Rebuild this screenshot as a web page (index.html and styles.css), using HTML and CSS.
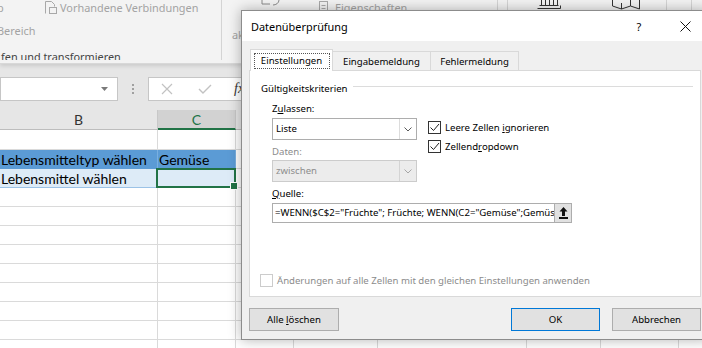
FILE: index.html
```html
<!DOCTYPE html>
<html lang="de">
<head>
    <meta charset="UTF-8">
    <meta name="viewport" content="width=device-width, initial-scale=1.0">
    <title>Datenüberprüfung</title>
    <link rel="stylesheet" href="styles.css">
</head>
<body>
    <div class="excel">
        <div class="ribbon">
            <div class="rgroup group-get">
                <div class="rrow">
                    <span class="rcut">b</span>
                    <svg class="ricon" width="13" height="14" viewBox="0 0 13 14"><path d="M1.5 13.5V1.5h6l3 3v2" fill="none" stroke="#a8a8a8"/><rect x="5.5" y="7.5" width="7" height="6" fill="none" stroke="#a8a8a8"/></svg>
                    <span>Vorhandene Verbindungen</span>
                </div>
                <div class="rrow second"><span class="rshift">Bereich</span></div>
                <div class="rlabel">fen und transformieren</div>
            </div>
            <div class="rgroup group-query">
                <div class="rbig">
                    <svg width="28" height="6" viewBox="0 0 28 6"><path d="M1 0v4h8M18 0c0 3-3 5-6 5" fill="none" stroke="#8a8a8a"/></svg>
                    <span class="rbig-label">Alle</span>
                    <span class="rbig-label">aktualisieren</span>
                </div>
                <div class="rsmall">
                    <svg width="11" height="13" viewBox="0 0 11 13"><rect x="1.5" y="0.5" width="8" height="12" fill="none" stroke="#a8a8a8"/><path d="M3.5 4.5h4M3.5 7.5h4" stroke="#a8a8a8"/></svg>
                    <span>Eigenschaften</span>
                </div>
            </div>
            <div class="rgroup group-narrow"></div>
            <div class="rgroup group-types">
                <svg width="26" height="9" viewBox="0 0 26 9"><path d="M5.5 0v5M9.5 0v5M13.5 0v5M17.5 0v5M21.5 0v5M3.5 5.5h19M1.5 8.5h23v-3" fill="none" stroke="#333"/></svg>
                <svg width="28" height="10" viewBox="0 0 28 10"><path d="M0.5 0v6l9 3 9-3 9 3V0M9.5 9V3M18.5 6V0" fill="none" stroke="#333"/></svg>
            </div>
            <div class="rgroup group-more">
                <svg width="7" height="4" viewBox="0 0 7 4"><path d="M0.5 0.5l3 3 3-3" fill="none" stroke="#9a9a9a"/></svg>
            </div>
        </div>

        <div class="formula-bar">
            <div class="name-box">
                <svg width="7" height="4" viewBox="0 0 7 4"><path d="M0 0h7L3.5 4z" fill="#7a7a7a"/></svg>
            </div>
            <div class="fb-dots"><i></i><i></i><i></i></div>
            <div class="fb-input">
                <svg class="fb-cancel" width="12" height="12" viewBox="0 0 12 12"><path d="M1 1l10 10M11 1L1 11" stroke="#c2c2c2" stroke-width="1.2"/></svg>
                <svg class="fb-ok" width="14" height="10" viewBox="0 0 14 10"><path d="M1 5l4 4 8-8" fill="none" stroke="#c2c2c2" stroke-width="1.4"/></svg>
                <span class="fx">fx</span>
            </div>
        </div>

        <div class="sheet">
            <div class="cell hd">B</div><div class="cell hd sel-col">C</div><div class="cell hd">D</div><div class="cell hd">E</div><div class="cell hd">F</div><div class="cell hd">G</div><div class="cell hd">H</div><div class="cell hd">I</div>
            <div class="cell"></div><div class="cell"></div><div class="cell"></div><div class="cell"></div><div class="cell"></div><div class="cell"></div><div class="cell"></div><div class="cell"></div>
            <div class="cell dark">Lebensmitteltyp wählen</div><div class="cell dark">Gemüse</div><div class="cell"></div><div class="cell"></div><div class="cell"></div><div class="cell"></div><div class="cell"></div><div class="cell"></div>
            <div class="cell light">Lebensmittel wählen</div><div class="cell light sel"></div><div class="cell"></div><div class="cell"></div><div class="cell"></div><div class="cell"></div><div class="cell"></div><div class="cell"></div>
            <div class="cell"></div><div class="cell"></div><div class="cell"></div><div class="cell"></div><div class="cell"></div><div class="cell"></div><div class="cell"></div><div class="cell"></div>
            <div class="cell"></div><div class="cell"></div><div class="cell"></div><div class="cell"></div><div class="cell"></div><div class="cell"></div><div class="cell"></div><div class="cell"></div>
            <div class="cell"></div><div class="cell"></div><div class="cell"></div><div class="cell"></div><div class="cell"></div><div class="cell"></div><div class="cell"></div><div class="cell"></div>
            <div class="cell"></div><div class="cell"></div><div class="cell"></div><div class="cell"></div><div class="cell"></div><div class="cell"></div><div class="cell"></div><div class="cell"></div>
            <div class="cell"></div><div class="cell"></div><div class="cell"></div><div class="cell"></div><div class="cell"></div><div class="cell"></div><div class="cell"></div><div class="cell"></div>
            <div class="cell"></div><div class="cell"></div><div class="cell"></div><div class="cell"></div><div class="cell"></div><div class="cell"></div><div class="cell"></div><div class="cell"></div>
            <div class="cell"></div><div class="cell"></div><div class="cell"></div><div class="cell"></div><div class="cell"></div><div class="cell"></div><div class="cell"></div><div class="cell"></div>
            <div class="cell"></div><div class="cell"></div><div class="cell"></div><div class="cell"></div><div class="cell tbl-end"></div><div class="cell tbl-end"></div><div class="cell tbl-end"></div><div class="cell"></div>
            <div class="cell"></div><div class="cell"></div><div class="cell"></div><div class="cell"></div><div class="cell"></div><div class="cell"></div><div class="cell"></div><div class="cell"></div>
        </div>
    </div>

    <div class="dialog">
        <div class="dlg-title">
            <span class="dlg-caption">Datenüberprüfung</span>
            <span class="dlg-btn help">?</span>
            <span class="dlg-btn">
                <svg width="11" height="11" viewBox="0 0 11 11"><path d="M0.5 0.5l10 10M10.5 0.5l-10 10" stroke="#111" stroke-width="1"/></svg>
            </span>
        </div>
        <div class="dlg-body">
            <div class="tabs">
                <div class="tab active"><span class="focus">Einstellungen</span></div>
                <div class="tab tab-input">Eingabemeldung</div>
                <div class="tab tab-error">Fehlermeldung</div>
            </div>
            <div class="panel">
                <div class="group-title"><span>Gültigkeitskriterien</span><i class="etched"></i></div>
                <div class="criteria">
                    <div class="crit-left">
                        <div class="lbl first">Z<u>u</u>lassen:</div>
                        <div class="combo">
                            <span class="combo-text">Liste</span>
                            <span class="combo-arrow"><svg width="8" height="5" viewBox="0 0 8 5"><path d="M0.5 0.5l3.5 3.5 3.5-3.5" fill="none" stroke="#5a5a5a"/></svg></span>
                        </div>
                        <div class="lbl off">Daten:</div>
                        <div class="combo off">
                            <span class="combo-text">zwischen</span>
                            <span class="combo-arrow"><svg width="8" height="5" viewBox="0 0 8 5"><path d="M0.5 0.5l3.5 3.5 3.5-3.5" fill="none" stroke="#a6a6a6"/></svg></span>
                        </div>
                    </div>
                    <div class="crit-right">
                        <div class="check">
                            <span class="box"><svg width="11" height="11" viewBox="0 0 11 11"><path d="M1.5 5.5l3 3 5.5-6.5" fill="none" stroke="#222"/></svg></span>
                            <span>Leere Zellen <u>i</u>gnorieren</span>
                        </div>
                        <div class="check">
                            <span class="box"><svg width="11" height="11" viewBox="0 0 11 11"><path d="M1.5 5.5l3 3 5.5-6.5" fill="none" stroke="#222"/></svg></span>
                            <span>Zellend<u>r</u>opdown</span>
                        </div>
                    </div>
                </div>
                <div class="lbl source-lbl"><u>Q</u>uelle:</div>
                <div class="source">
                    <div class="source-input">=WENN($C$2="Früchte"; Früchte; WENN(C2="Gemüse";Gemüse;""))</div>
                    <div class="source-btn">
                        <svg width="9" height="12" viewBox="0 0 9 12"><path d="M4.5 0L8.5 4.5H6V9H3V4.5H0.5Z" fill="#111"/><rect x="0" y="10" width="9" height="2" fill="#111"/></svg>
                    </div>
                </div>
                <div class="check off apply">
                    <span class="box"></span>
                    <span>Änderungen auf alle Zellen mit den gleichen Einstellungen anwenden</span>
                </div>
            </div>
            <div class="dlg-buttons">
                <button class="btn wide">Alle <u>l</u>öschen</button>
                <span class="spacer"></span>
                <button class="btn default">OK</button>
                <button class="btn">Abbrechen</button>
            </div>
        </div>
    </div>
</body>
</html>
```

FILE: styles.css
```css
* {
    box-sizing: border-box;
}

body {
    margin: 0;
    width: 702px;
    height: 348px;
    overflow: hidden;
    position: relative;
    background: #fff;
    font-family: "Noto Sans", sans-serif;
    color: #000;
}

/* ---------- excel in the background ---------- */

.ribbon {
    position: relative;
    z-index: 1;
    display: flex;
    height: 64px;
    background: #f3f3f3;
    border-bottom: 1px solid #d8d8d8;
    box-shadow: 0 2px 4px rgba(0, 0, 0, 0.12);
    font-size: 10.9px;
    color: #a3a3a3;
    white-space: nowrap;
}

.rgroup {
    height: 60px;
    border-right: 1px solid #d4d4d4;
}

.group-get {
    width: 222px;
    display: flex;
    flex-direction: column;
    overflow: hidden;
}

.rrow {
    display: flex;
    align-items: center;
    height: 14px;
}

.rrow.second {
    margin-top: 9px;
}

.rcut {
    width: 47px;
    margin-left: -3px;
}

.ricon {
    margin-right: 3px;
}

.rshift {
    margin-left: -3px;
}

.rlabel {
    margin-top: 13px;
    height: 14px;
    line-height: 14px;
    padding-left: 1px;
    color: #444;
}

.group-query {
    width: 276px;
    display: flex;
    padding-left: 10px;
}

.rbig {
    width: 66px;
    display: flex;
    flex-direction: column;
    align-items: center;
}

.rbig svg {
    margin-left: 20px;
}

.rbig-label {
    line-height: 14px;
    margin-top: 8px;
}

.rbig-label + .rbig-label {
    align-self: flex-start;
    margin-top: 0;
}

.rsmall {
    display: flex;
    align-items: center;
    gap: 6px;
    height: 14px;
    margin-left: 20px;
}

.group-narrow {
    width: 10px;
}

.group-types {
    width: 159px;
    display: flex;
    align-items: flex-start;
    gap: 50px;
    padding-left: 28px;
}

.group-more {
    width: 25px;
    padding: 2px 0 0 5px;
}

.formula-bar {
    display: flex;
    height: 46px;
    padding-top: 13px;
    background: #e6e6e6;
}

.name-box {
    width: 118px;
    height: 24px;
    background: #fff;
    border: 1px solid #c6c6c6;
    display: flex;
    align-items: center;
    justify-content: flex-end;
    padding-right: 9px;
}

.fb-dots {
    width: 30px;
    height: 24px;
    display: flex;
    flex-direction: column;
    align-items: center;
    justify-content: center;
    gap: 2px;
}

.fb-dots i {
    width: 2px;
    height: 2px;
    background: #a0a0a0;
}

.fb-input {
    flex: 1;
    height: 24px;
    background: #fff;
    border: 1px solid #c6c6c6;
    display: flex;
    align-items: center;
    padding-left: 12px;
}

.fb-ok {
    margin-left: 25px;
}

.fx {
    margin-left: 22px;
    font-family: "Liberation Serif", serif;
    font-style: italic;
    font-size: 14px;
    color: #333;
}

.sheet {
    display: grid;
    grid-template-columns: 158px 78px 58px 84px 149px 74px 78px 80px;
    grid-template-rows: 20px 20px repeat(11, 19px);
    font-family: Lato, sans-serif;
    font-size: 14px;
}

.cell {
    border-right: 1px solid #dadada;
    border-bottom: 1px solid #dadada;
    padding-left: 1px;
    line-height: 19px;
    white-space: nowrap;
    overflow: hidden;
}

.cell.hd {
    background: #e6e6e6;
    border-right-color: #c8c8c8;
    border-bottom-color: #bdbdbd;
    text-align: center;
    color: #333;
    padding-left: 0;
}

.cell.hd.sel-col {
    background: #d2d2d2;
    border-bottom: 2px solid #217346;
    color: #217346;
}

.cell.dark {
    background: #5b9bd5;
    border-right-color: #79afe0;
    border-bottom-color: #5b9bd5;
}

.cell.light {
    background: #ddebf7;
    border-right-color: #ddebf7;
    border-bottom-color: #9bc2e6;
}

.cell.sel {
    position: relative;
    overflow: visible;
}

.cell.sel::after {
    content: "";
    position: absolute;
    left: -2px;
    top: -1px;
    right: -1px;
    bottom: -1px;
    border: 2px solid #217346;
}

.cell.sel::before {
    content: "";
    position: absolute;
    right: -3px;
    bottom: -3px;
    width: 6px;
    height: 6px;
    background: #217346;
    border: 1px solid #fff;
    z-index: 1;
}

.cell.tbl-end {
    border-bottom-color: #5b9bd5;
}

/* ---------- data validation dialog ---------- */

.dialog {
    position: absolute;
    left: 241px;
    top: 10px;
    width: 468px;
    height: 330px;
    z-index: 2;
    border: 1px solid #8c8c8c;
    background: #f0f0f0;
    box-shadow: 0 0 12px rgba(0, 0, 0, 0.3);
    font-size: 9.6px;
}

.dlg-title {
    height: 30px;
    background: #fff;
    display: flex;
    align-items: center;
    padding-left: 9px;
}

.dlg-caption {
    flex: 1;
    font-size: 10.9px;
}

.dlg-btn {
    width: 46px;
    height: 30px;
    display: flex;
    align-items: center;
    justify-content: center;
}

.dlg-btn.help {
    font-size: 11px;
}

.dlg-body {
    padding: 8px 7px 8px 7px;
}

.tabs {
    display: flex;
    align-items: flex-end;
    height: 21px;
    padding-left: 1px;
}

.tab {
    height: 19px;
    border: 1px solid #d9d9d9;
    border-bottom: none;
    display: flex;
    align-items: center;
    justify-content: center;
    margin-left: -1px;
    background: #f0f0f0;
}

.tab.active {
    position: relative;
    z-index: 1;
    width: 83px;
    height: 22px;
    margin-left: 0;
    margin-bottom: -1px;
    background: #fff;
}

.tab-input {
    width: 99px;
}

.tab-error {
    width: 89px;
}

.focus {
    width: 76px;
    height: 16px;
    border: 1px dotted #555;
    display: flex;
    align-items: center;
    justify-content: center;
}

.panel {
    height: 227px;
    border: 1px solid #d9d9d9;
    background: #fff;
    padding: 10px 7px 9px 11px;
    display: flex;
    flex-direction: column;
}

.group-title {
    display: flex;
    align-items: center;
    height: 14px;
}

.etched {
    flex: 1;
    margin-left: 5px;
    margin-top: -2px;
    border-top: 1px solid #dcdcdc;
    border-bottom: 1px solid #fff;
}

.criteria {
    display: flex;
    padding-left: 11px;
}

.crit-left {
    width: 145px;
}

.lbl {
    height: 14px;
    line-height: 14px;
    margin-top: 5px;
}

.lbl.first {
    margin-top: 7px;
}

.off {
    color: #8c8c8c;
}

.combo {
    display: flex;
    height: 22px;
    margin-top: 2px;
    border: 1px solid #adadad;
    background: #fff;
}

.lbl.off + .combo {
    margin-top: 1px;
}

.combo.off {
    background: #ececec;
    border-color: #cccccc;
}

.combo-text {
    flex: 1;
    line-height: 20px;
    padding-left: 3px;
}

.combo-arrow {
    width: 17px;
    border-left: 1px solid #dcdcdc;
    display: flex;
    align-items: center;
    justify-content: center;
}

.combo.off .combo-arrow {
    border-left-color: #d4d4d4;
}

.crit-right {
    margin-left: 11px;
    padding-top: 25px;
}

.check {
    display: flex;
    align-items: center;
    gap: 4px;
    height: 14px;
}

.check + .check {
    margin-top: 5px;
}

.box {
    width: 13px;
    height: 13px;
    border: 1px solid #333;
    background: #fff;
    display: flex;
    align-items: center;
    justify-content: center;
}

.source-lbl {
    margin-left: 11px;
}

.source {
    display: flex;
    margin: 2px 0 0 11px;
}

.source-input {
    width: 283px;
    height: 20px;
    line-height: 18px;
    border: 1px solid #adadad;
    background: #fff;
    padding-left: 2px;
    white-space: nowrap;
    overflow: hidden;
}

.source-btn {
    width: 18px;
    height: 20px;
    margin-left: -1px;
    border: 1px solid #adadad;
    background: #e1e1e1;
    display: flex;
    align-items: center;
    justify-content: center;
}

.apply {
    margin-top: auto;
    margin-left: -1px;
}

.apply .box {
    border-color: #cccccc;
}

.dlg-buttons {
    display: flex;
    gap: 12px;
    margin-top: 11px;
}

.spacer {
    flex: 1;
}

.btn {
    width: 89px;
    height: 23px;
    padding: 0;
    border: 1px solid #adadad;
    background: #e1e1e1;
    font-family: inherit;
    font-size: 9.6px;
    color: #000;
}

.btn.wide {
    width: 90px;
}

.btn.default {
    border-color: #0078d7;
}
```
